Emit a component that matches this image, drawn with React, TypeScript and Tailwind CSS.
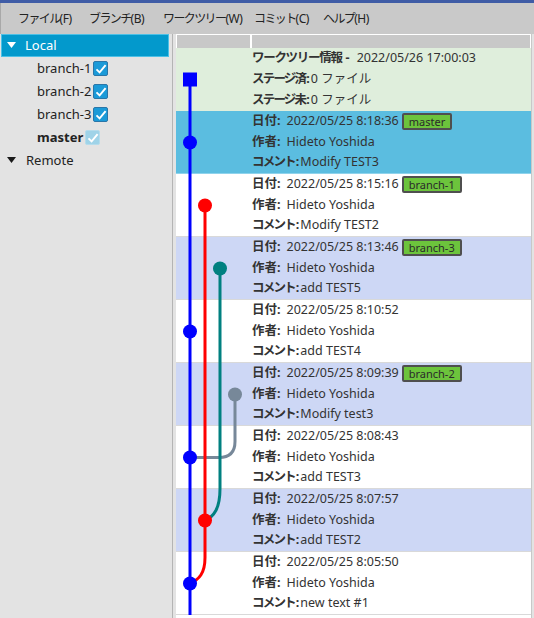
import React from "react";

const FONT = { fontFamily: '"Noto Sans", "Noto Sans CJK JP", sans-serif' };

type Commit = { date: string; comment: string; badge?: string; bg: string };

const commits: Commit[] = [
  { date: "2022/05/25 8:18:36", comment: "Modify TEST3", badge: "master", bg: "bg-[#5bbde0] border-[#8fd3ec]" },
  { date: "2022/05/25 8:15:16", comment: "Modify TEST2", badge: "branch-1", bg: "bg-white border-[#d9d9d9]" },
  { date: "2022/05/25 8:13:46", comment: "add TEST5", badge: "branch-3", bg: "bg-[#cdd7f5] border-[#d9d9d9]" },
  { date: "2022/05/25 8:10:52", comment: "add TEST4", bg: "bg-white border-[#d9d9d9]" },
  { date: "2022/05/25 8:09:39", comment: "Modify test3", badge: "branch-2", bg: "bg-[#cdd7f5] border-[#d9d9d9]" },
  { date: "2022/05/25 8:08:43", comment: "add TEST3", bg: "bg-white border-[#d9d9d9]" },
  { date: "2022/05/25 8:07:57", comment: "add TEST2", bg: "bg-[#cdd7f5] border-[#d9d9d9]" },
  { date: "2022/05/25 8:05:50", comment: "new text #1", bg: "bg-white border-[#d9d9d9]" },
];

function Check({ dim }: { dim?: boolean }) {
  return (
    <span
      className={
        "ml-[2px] inline-flex items-center justify-center w-[15px] h-[15px] rounded-[2px] border " +
        (dim ? "bg-[#9fd3e8] border-[#b5dcec]" : "bg-[#1b9ad8] border-[#2a76a8]")
      }
    >
      <svg width="12" height="12" viewBox="0 0 12 12">
        <path d="M1.5 6.3 L4.6 9.4 L10.6 2.2" fill="none" stroke="white" strokeWidth="1.9" />
      </svg>
    </span>
  );
}

function Tri({ white }: { white?: boolean }) {
  return (
    <svg width="9" height="7" viewBox="0 0 9 7" className="shrink-0">
      <path d="M0 0 L9 0 L4.5 6 Z" fill={white ? "#ffffff" : "#1a1a1a"} />
    </svg>
  );
}

function Badge({ text }: { text: string }) {
  return (
    <span className="ml-[3px] inline-flex items-center h-[17px] px-[5px] rounded-[2px] border-2 border-[#4f4f4f] bg-[#6cc43c] text-[11px] leading-none text-[#2a2a2a]">
      {text}
    </span>
  );
}

function Line({ label, children, tight }: { label: string; children: React.ReactNode; tight?: boolean }) {
  return (
    <div className="h-[21px] flex items-center whitespace-nowrap">
      <span className={"font-bold text-[#333] " + (tight ? "tracking-[-1.8px]" : "")}>{label}</span>
      <span className={"font-bold text-[#333] " + (tight ? "ml-[1px] mr-[1px]" : "mr-[6px]")}>:</span>
      {children}
    </div>
  );
}

function Graph() {
  const cy = (i: number) => 63 * i + 31.5;
  const B = 14, R = 29, T = 44, G = 59;
  return (
    <svg className="absolute left-0 top-0 pointer-events-none" width="75" height="567" viewBox="0 0 75 567">
      <path d={`M${G} ${cy(5)} L${G} ${cy(6) - 16} Q${G} ${cy(6)} ${G - 16} ${cy(6)} L${B} ${cy(6)}`} fill="none" stroke="#778899" strokeWidth="3" />
      <path d={`M${T} ${cy(3)} L${T} ${cy(7) - 32} C${T} ${cy(7) - 12} ${T - 6} ${cy(7) - 4} ${R} ${cy(7)}`} fill="none" stroke="#008080" strokeWidth="3" />
      <path d={`M${R} ${cy(2)} L${R} ${cy(8) - 26} C${R} ${cy(8) - 10} ${R - 6} ${cy(8) - 4} ${B} ${cy(8)}`} fill="none" stroke="#ff0000" strokeWidth="3" />
      <path d={`M${B} ${cy(0)} L${B} 567`} fill="none" stroke="#0000ff" strokeWidth="3" />
      <rect x={B - 7} y={cy(0) - 7} width="14" height="14" fill="#0000ff" />
      <circle cx={B} cy={cy(1)} r="7" fill="#0000ff" />
      <circle cx={R} cy={cy(2)} r="7" fill="#ff0000" />
      <circle cx={T} cy={cy(3)} r="7" fill="#008080" />
      <circle cx={B} cy={cy(4)} r="7" fill="#0000ff" />
      <circle cx={G} cy={cy(5)} r="7" fill="#778899" />
      <circle cx={B} cy={cy(6)} r="7" fill="#0000ff" />
      <circle cx={R} cy={cy(7)} r="7" fill="#ff0000" />
      <circle cx={B} cy={cy(8)} r="7" fill="#0000ff" />
    </svg>
  );
}

export default function App() {
  const menus = [
    { k: "ファイル", a: "(F)", w: "w-[71px]" },
    { k: "ブランチ", a: "(B)", w: "w-[74px]" },
    { k: "ワークツリー", a: "(W)", w: "w-[91px]" },
    { k: "コミット", a: "(C)", w: "w-[69px]" },
    { k: "ヘルプ", a: "(H)", w: "w-[70px]" },
  ];
  const branches = ["branch-1", "branch-2", "branch-3"];
  return (
    <div className="w-[534px] h-[618px] flex flex-col overflow-hidden bg-[#e3e3e3] text-[#222]" style={FONT}>
      <div className="h-[3px] bg-[#3f5ca6]" />
      <div className="h-[31px] flex items-center pl-[17px] pt-[1px] bg-[#c9c9c9] border-l border-[#a8a8a8] text-[12px] text-[#222]">
        {menus.map((m) => (
          <span key={m.k} className={m.w + " whitespace-nowrap"}>
            <span className="tracking-[-1.6px]">{m.k}</span>
            <span className="tracking-[-0.5px]">{m.a}</span>
          </span>
        ))}
      </div>
      <div className="flex flex-1 min-h-0">
        <div className="w-[172px] shrink-0 bg-[#e3e3e3] text-[13px]">
          <div className="ml-[1px] mr-[3px] h-[23px] flex items-center gap-[9px] pl-[5px] bg-[#0399cc] border border-[#4cc0e6] text-white">
            <Tri white />
            <span>Local</span>
          </div>
          {branches.map((b) => (
            <div key={b} className="h-[23px] flex items-center pl-[37px]">
              <span>{b}</span>
              <Check />
            </div>
          ))}
          <div className="h-[23px] flex items-center pl-[37px]">
            <span className="font-bold">master</span>
            <Check dim />
          </div>
          <div className="h-[23px] flex items-center gap-[10px] pl-[7px]">
            <Tri />
            <span>Remote</span>
          </div>
        </div>
        <div className="w-[1px] bg-[#b4b4b4]" />
        <div className="flex-1 pl-[3px] flex flex-col">
          <div className="w-[356px] flex-1 flex flex-col bg-white border-r border-[#c8c8c8]">
            <div className="h-[14px] flex border-t border-white bg-white pl-[1px] pr-[1px]">
              <div className="w-[73px] bg-[#c8c8c8]" />
              <div className="w-[2px] bg-white" />
              <div className="flex-1 bg-[#c8c8c8]" />
            </div>
            <div className="relative flex flex-col text-[12.5px] text-[#333]">
              <Graph />
              <div className="h-[63px] pl-[76px] bg-[#dfeedc] flex flex-col">
                <div className="h-[21px] flex items-center whitespace-nowrap">
                  <span className="font-bold tracking-[-1.3px]">ワークツリー情報</span>
                  <span className="font-bold ml-[4px] mr-[7px]">-</span>
                  <span>2022/05/26 17:00:03</span>
                </div>
                <Line label="ステージ済" tight><span>0 ファイル</span></Line>
                <Line label="ステージ未" tight><span>0 ファイル</span></Line>
              </div>
              {commits.map((c) => (
                <div key={c.date} className={"h-[63px] pl-[76px] flex flex-col border-b " + c.bg}>
                  <Line label="日付">
                    <span>{c.date}</span>
                    {c.badge && <Badge text={c.badge} />}
                  </Line>
                  <Line label="作者"><span>Hideto Yoshida</span></Line>
                  <Line label="コメント" tight><span>{c.comment}</span></Line>
                </div>
              ))}
            </div>
          </div>
        </div>
      </div>
    </div>
  );
}
